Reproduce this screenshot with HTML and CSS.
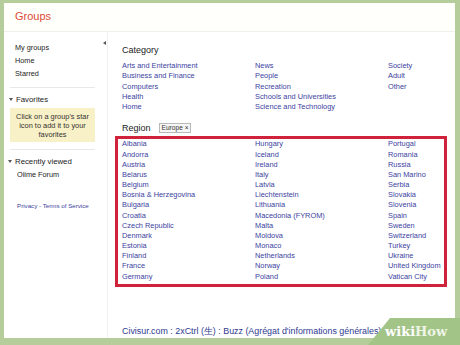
FILE: index.html
```html
<!DOCTYPE html>
<html lang="en">
  <head>
    <title>Groups</title>
    <meta charset="utf-8">
    <link rel="stylesheet" href="styles.css">
  </head>
  <body>

  <div class="screen">
    <div class="topbar">
      <span class="brand">Groups</span>
    </div>

    <div class="layout">
      <div class="sidebar">
        <span class="collapse"></span>
        <div class="nav">
          <div>My groups</div>
          <div>Home</div>
          <div>Starred</div>
        </div>
        <div class="rule"></div>
        <div class="sec-title"><i class="caret"></i>Favorites</div>
        <div class="hint">Click on a group's star<br>icon to add it to your<br>favorites</div>
        <div class="rule"></div>
        <div class="sec-title recent-title"><i class="caret"></i>Recently viewed</div>
        <div class="recent">Oiime Forum</div>
        <div class="legal"><a href="#">Privacy</a> - <a href="#">Terms of Service</a></div>
      </div>

      <div class="content">
        <div class="heading">Category</div>
        <div class="cats">
          <div class="col">
            <a href="#">Arts and Entertainment</a>
            <a href="#">Business and Finance</a>
            <a href="#">Computers</a>
            <a href="#">Health</a>
            <a href="#">Home</a>
          </div>
          <div class="col">
            <a href="#">News</a>
            <a href="#">People</a>
            <a href="#">Recreation</a>
            <a href="#">Schools and Universities</a>
            <a href="#">Science and Technology</a>
          </div>
          <div class="col">
            <a href="#">Society</a>
            <a href="#">Adult</a>
            <a href="#">Other</a>
          </div>
        </div>

        <div class="heading region-head">Region <span class="tag">Europe &times;</span></div>

        <div class="regions">
          <div class="col">
            <a href="#">Albania</a>
            <a href="#">Andorra</a>
            <a href="#">Austria</a>
            <a href="#">Belarus</a>
            <a href="#">Belgium</a>
            <a href="#">Bosnia &amp; Herzegovina</a>
            <a href="#">Bulgaria</a>
            <a href="#">Croatia</a>
            <a href="#">Czech Republic</a>
            <a href="#">Denmark</a>
            <a href="#">Estonia</a>
            <a href="#">Finland</a>
            <a href="#">France</a>
            <a href="#">Germany</a>
          </div>
          <div class="col">
            <a href="#">Hungary</a>
            <a href="#">Iceland</a>
            <a href="#">Ireland</a>
            <a href="#">Italy</a>
            <a href="#">Latvia</a>
            <a href="#">Liechtenstein</a>
            <a href="#">Lithuania</a>
            <a href="#">Macedonia (FYROM)</a>
            <a href="#">Malta</a>
            <a href="#">Moldova</a>
            <a href="#">Monaco</a>
            <a href="#">Netherlands</a>
            <a href="#">Norway</a>
            <a href="#">Poland</a>
          </div>
          <div class="col">
            <a href="#">Portugal</a>
            <a href="#">Romania</a>
            <a href="#">Russia</a>
            <a href="#">San Marino</a>
            <a href="#">Serbia</a>
            <a href="#">Slovakia</a>
            <a href="#">Slovenia</a>
            <a href="#">Spain</a>
            <a href="#">Sweden</a>
            <a href="#">Switzerland</a>
            <a href="#">Turkey</a>
            <a href="#">Ukraine</a>
            <a href="#">United Kingdom</a>
            <a href="#">Vatican City</a>
          </div>
        </div>

        <div class="result"><a href="#">Civisur.com : 2xCtrl (生) : Buzz (Agrégat d'informations générales)</a></div>
      </div>
    </div>
  </div>

  <div class="wikihow"><b>wiki</b><span>How</span></div>

  </body>
</html>
```

FILE: styles.css
```css
html {
  height: 100%;
}
body {
  margin: 0;
  padding: 3px 5px 0 4px;
  background: #b4cd9a;
  color: #222;
  font-family: "Liberation Sans", Arial, sans-serif;
  height: 345px;
  box-sizing: border-box;
  overflow: hidden;
  position: relative;
}

a {
  color: #3b42a0;
  text-decoration: none;
}

.screen {
  background: #fff;
  height: 335px;
  overflow: hidden;
}

.topbar {
  height: 28px;
  border-bottom: 1px solid #f0f0ea;
  padding-left: 11px;
  background: #fffffc;
}
.brand {
  display: block;
  padding-top: 6px;
  font-size: 11px;
  line-height: 14px;
  color: #dd4b39;
}

.layout {
  display: flex;
  height: 306px;
}

.sidebar {
  flex: 0 0 103px;
  border-right: 1px solid #f1f1f1;
  position: relative;
  padding-top: 9px;
  font-size: 7.3px;
}

.collapse {
  position: absolute;
  right: 1px;
  top: 9px;
  width: 0;
  height: 0;
  border-top: 2px solid transparent;
  border-bottom: 2px solid transparent;
  border-right: 3px solid #555;
}

.nav {
  padding-left: 11px;
  line-height: 13px;
}

.rule {
  margin: 7px 0 0 6px;
  width: 85px;
  border-top: 1px solid #e8e8e8;
}

.sec-title {
  margin-top: 6px;
  padding-left: 5px;
  line-height: 12px;
  font-size: 7.8px;
}
.caret {
  display: inline-block;
  width: 0;
  height: 0;
  border-left: 2px solid transparent;
  border-right: 2px solid transparent;
  border-top: 3px solid #555;
  margin-right: 3px;
  vertical-align: 1px;
}

.hint {
  margin: 2px 0 0 6px;
  width: 85px;
  padding: 3.5px 0;
  background: #f8f0c6;
  text-align: center;
  font-size: 7.4px;
  line-height: 9px;
  color: #333;
}

.recent-title {
  margin-top: 6px;
  padding-left: 4px;
}
.recent {
  padding-left: 13px;
  line-height: 13px;
}

.legal {
  margin-top: 21px;
  padding-left: 13px;
  font-size: 6.2px;
  color: #3b42a0;
}

.content {
  flex: 1;
  min-width: 0;
  padding: 12px 0 0 14px;
}

.heading {
  font-size: 9px;
  line-height: 12px;
}

.cats, .regions {
  display: grid;
  grid-template-columns: 133px 133px 133px;
  font-size: 7.4px;
}
.col {
  display: flex;
  flex-direction: column;
}
.cats {
  margin-top: 5px;
  line-height: 10.3px;
}

.region-head {
  margin-top: 10px;
  display: flex;
  align-items: center;
}
.tag {
  margin-left: 8px;
  border: 1px solid #b8b8b8;
  background: #f6f6f6;
  font-size: 6.6px;
  line-height: 8px;
  padding: 0 2px;
  color: #333;
}

.regions {
  margin: 2px 0 0 -7px;
  width: 322px;
  border: 3px solid #d1223b;
  padding: 0 0 2px 4px;
  line-height: 10.15px;
}

.result {
  margin-top: 38px;
  font-size: 8.9px;
  line-height: 12px;
  white-space: nowrap;
}
.result a {
  color: #2e3b8f;
}

.wikihow {
  position: absolute;
  right: 0;
  bottom: 0;
  width: 92px;
  height: 27px;
  background: #a3c487;
  clip-path: polygon(22px 0, 100% 0, 100% 100%, 0 100%);
  font-family: "DejaVu Serif", "Liberation Serif", serif;
  font-size: 13px;
  line-height: 27px;
  color: #fff;
  padding-left: 17px;
  box-sizing: border-box;
}
.wikihow span {
  font-weight: bold;
  color: #eef5e6;
}
```
